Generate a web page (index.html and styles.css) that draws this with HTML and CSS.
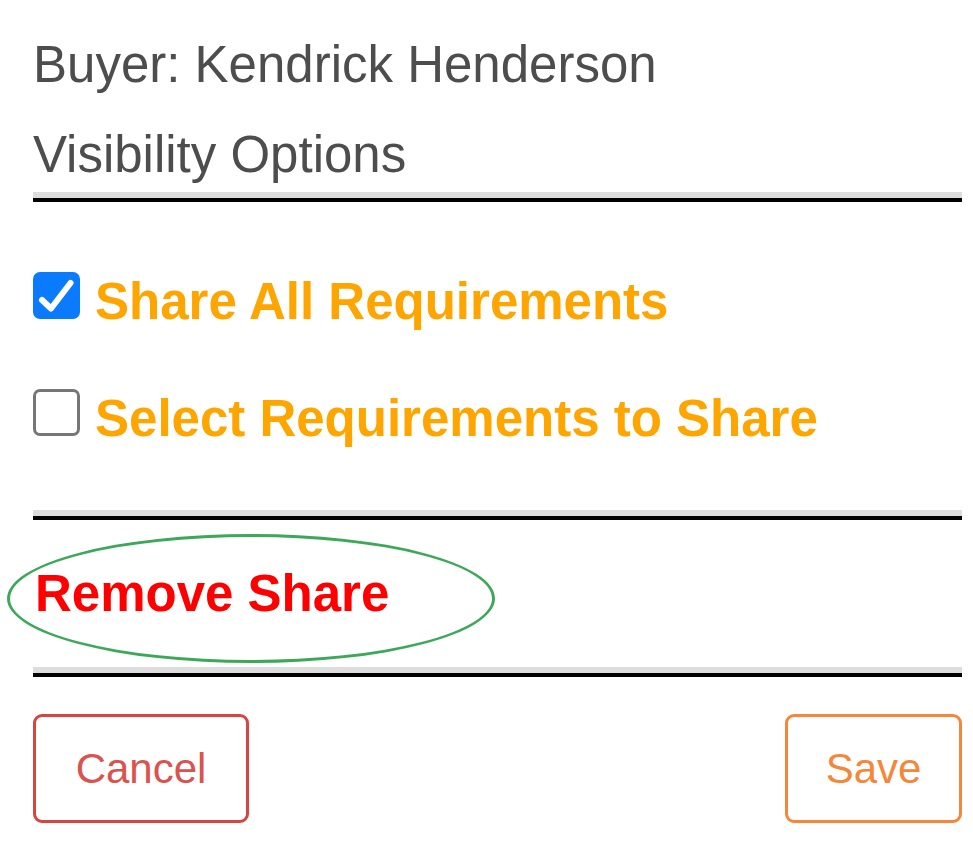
FILE: index.html
```html
<!DOCTYPE html>
<html lang="en">
<head>
<meta charset="utf-8">
<title>Share Visibility</title>
<link rel="stylesheet" href="styles.css">
</head>
<body>
<div class="panel">
  <p class="info">Buyer: Kendrick Henderson</p>
  <p class="info section-title">Visibility Options</p>
  <div class="divider"></div>

  <div class="options">
    <label class="option">
      <span class="box checked">
        <svg viewBox="0 0 47 47" width="47" height="47"><path d="M9 28 L18 36.5 L37.5 11" fill="none" stroke="#fff" stroke-width="6" stroke-linecap="round" stroke-linejoin="round"/></svg>
      </span>
      <span class="option-text">Share All Requirements</span>
    </label>
    <label class="option second">
      <span class="box"></span>
      <span class="option-text">Select Requirements to Share</span>
    </label>
  </div>

  <div class="divider d2"></div>

  <div class="remove-row">
    <span class="remove">Remove Share</span>
    <span class="highlight"></span>
  </div>

  <div class="divider d3"></div>

  <div class="actions">
    <button class="btn cancel">Cancel</button>
    <button class="btn save">Save</button>
  </div>
</div>
</body>
</html>
```

FILE: styles.css
```css
* { box-sizing: border-box; }

html, body {
  margin: 0;
  padding: 0;
  background: #ffffff;
}

body {
  font-family: "Liberation Sans", Arial, Helvetica, sans-serif;
}

.panel {
  padding: 35px 11px 0 33px;
}

.info {
  margin: 0;
  font-size: 51px;
  line-height: 60px;
  color: #4d4d4d;
}

.section-title {
  margin-top: 30px;
}

.divider {
  height: 10px;
  margin-top: 7px;
  border-top: 6px solid #dddddd;
  border-bottom: 4px solid #000000;
}

.options {
  padding-top: 70px;
}

.option {
  display: flex;
  align-items: flex-start;
  gap: 15px;
}

.option.second {
  margin-top: 57px;
}

.box {
  flex: none;
  width: 47px;
  height: 47px;
  border-radius: 7px;
  border: 3px solid #767676;
  background: #ffffff;
  margin-top: 0;
  display: flex;
  align-items: center;
  justify-content: center;
}

.box.checked {
  border: none;
  background: #0b7bfd;
}

.box svg { display: block; }

.option-text {
  font-size: 51px;
  line-height: 60px;
  font-weight: bold;
  color: #ffa500;
}

.d2 { margin-top: 61px; }

.remove-row {
  position: relative;
  margin-top: 44px;
  height: 60px;
}

.remove {
  display: block;
  margin-left: 2px;
  font-size: 51px;
  line-height: 60px;
  font-weight: bold;
  color: #ff0000;
}

.highlight {
  position: absolute;
  left: -26px;
  top: -30px;
  width: 488px;
  height: 129px;
  border: 3px solid #3da85a;
  border-radius: 50%;
  pointer-events: none;
}

.d3 { margin-top: 43px; }

.actions {
  display: flex;
  justify-content: space-between;
  margin-top: 37px;
}

.btn {
  height: 109px;
  background: #ffffff;
  border: 3px solid;
  border-radius: 9px;
  font-family: "Liberation Sans", Arial, Helvetica, sans-serif;
  font-size: 42px;
  padding: 0;
}

.cancel {
  width: 216px;
  color: #d9534f;
  border-color: #d64541;
}

.save {
  width: 177px;
  color: #f5873a;
  border-color: #f5873a;
}
```
